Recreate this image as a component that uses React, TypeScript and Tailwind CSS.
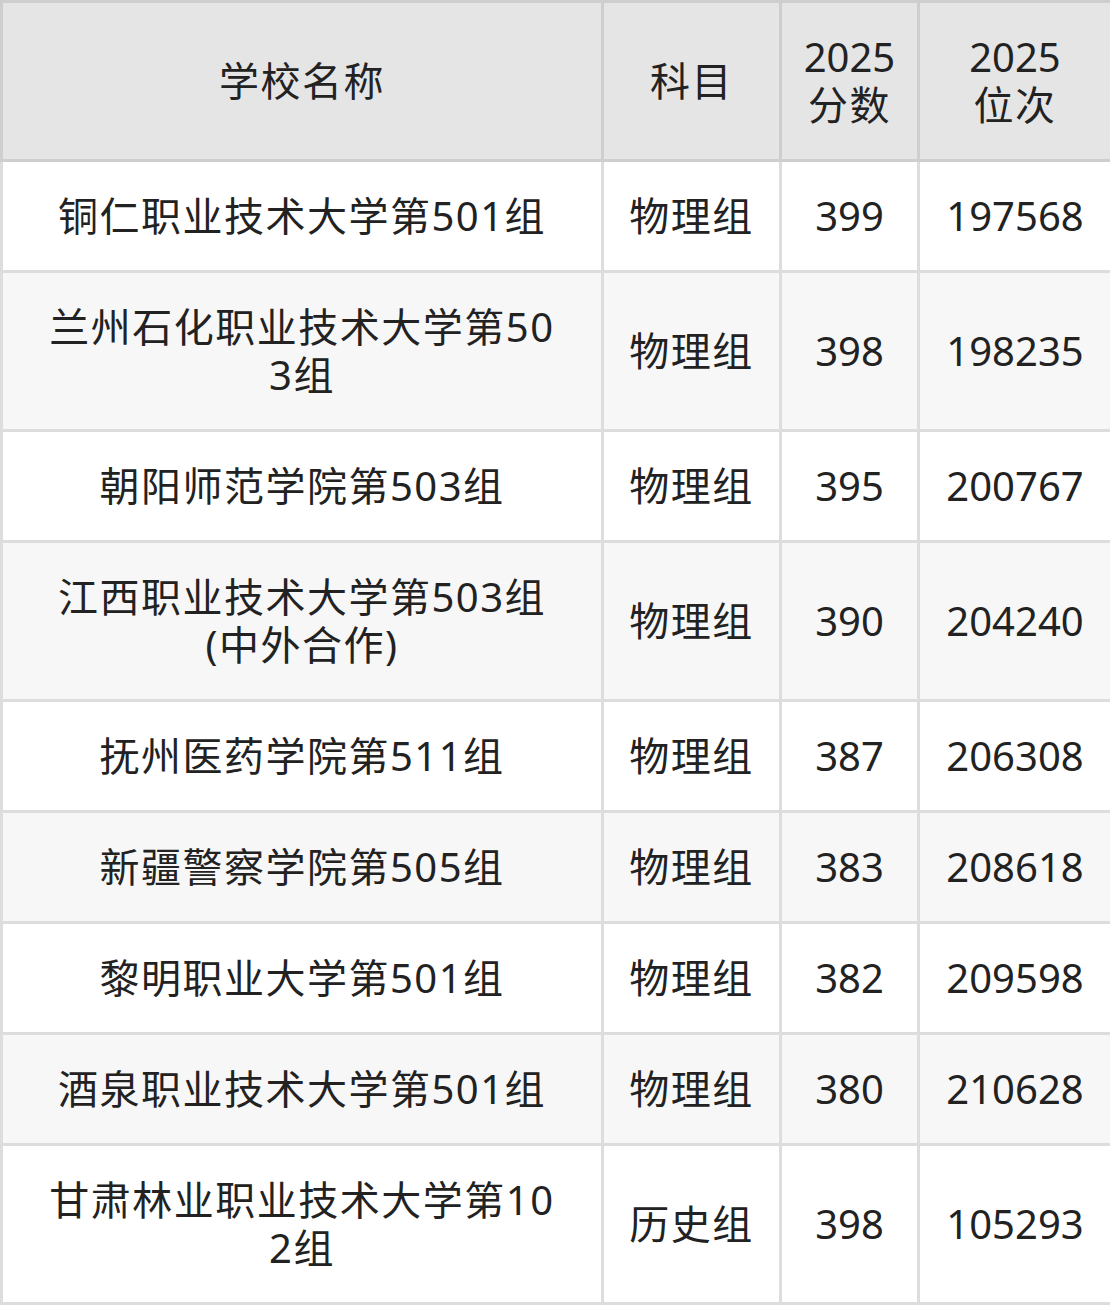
import React from 'react';

interface Row {
  name: string;
  subject: string;
  score: string;
  rank: string;
}

const rows: Row[] = [
  { name: '铜仁职业技术大学第501组', subject: '物理组', score: '399', rank: '197568' },
  { name: '兰州石化职业技术大学第503组', subject: '物理组', score: '398', rank: '198235' },
  { name: '朝阳师范学院第503组', subject: '物理组', score: '395', rank: '200767' },
  { name: '江西职业技术大学第503组(中外合作)', subject: '物理组', score: '390', rank: '204240' },
  { name: '抚州医药学院第511组', subject: '物理组', score: '387', rank: '206308' },
  { name: '新疆警察学院第505组', subject: '物理组', score: '383', rank: '208618' },
  { name: '黎明职业大学第501组', subject: '物理组', score: '382', rank: '209598' },
  { name: '酒泉职业技术大学第501组', subject: '物理组', score: '380', rank: '210628' },
  { name: '甘肃林业职业技术大学第102组', subject: '历史组', score: '398', rank: '105293' },
];

export default function App() {
  return (
    <div
      className="w-[1110px] bg-white text-[#222]"
      style={{ fontFamily: '"Noto Sans", "Noto Sans CJK SC", sans-serif' }}
    >
      <table className="w-full table-fixed border-collapse text-[40px] leading-[48px]">
        <colgroup>
          <col className="w-[601px]" />
          <col className="w-[178px]" />
          <col className="w-[138px]" />
          <col className="w-[193px]" />
        </colgroup>
        <thead>
          <tr className="bg-[#e5e5e5]">
            <th className="border-[3px] border-[#cecece] px-[40px] py-[30px] font-normal tracking-[1.5px]">学校名称</th>
            <th className="border-[3px] border-[#cecece] px-2 py-[30px] font-normal tracking-[1.5px]">科目</th>
            <th className="border-[3px] border-[#cecece] px-1 py-[30px] font-normal">
              2025
              <br />
              <span className="tracking-[1.5px]">分数</span>
            </th>
            <th className="border-[3px] border-[#cecece] px-1 py-[30px] font-normal">
              2025
              <br />
              <span className="tracking-[1.5px]">位次</span>
            </th>
          </tr>
        </thead>
        <tbody>
          {rows.map((r, i) => (
            <tr key={i} className={i % 2 === 1 ? 'bg-[#f7f7f7]' : 'bg-white'}>
              <td className="border-[3px] border-[#dddddd] px-[40px] py-[30px] text-center break-all tracking-[1.5px]">
                {r.name}
              </td>
              <td className="border-[3px] border-[#dddddd] px-2 py-[30px] text-center tracking-[1.5px]">{r.subject}</td>
              <td className="border-[3px] border-[#dddddd] px-1 py-[30px] text-center">{r.score}</td>
              <td className="border-[3px] border-[#dddddd] px-1 py-[30px] text-center">{r.rank}</td>
            </tr>
          ))}
        </tbody>
      </table>
    </div>
  );
}
